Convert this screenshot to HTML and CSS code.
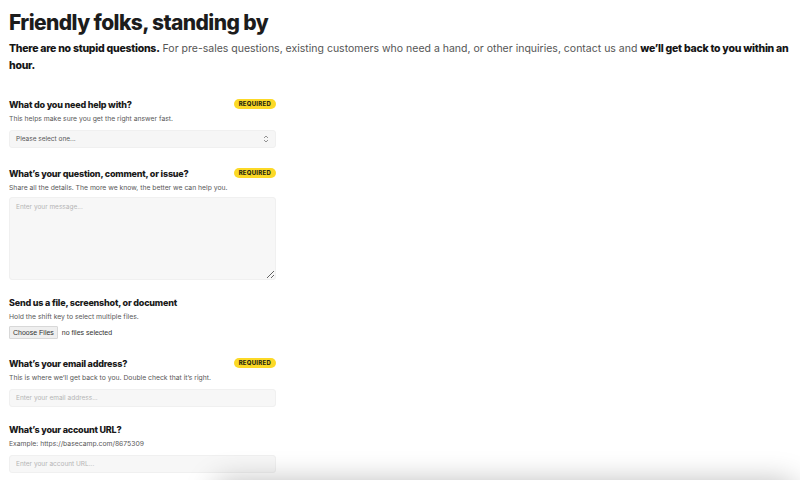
FILE: index.html
```html
<!DOCTYPE html>
<html lang="en">
<head>
<meta charset="utf-8">
<title>Contact</title>
<link rel="stylesheet" href="styles.css">
</head>
<body>
<main class="page">
  <h1 class="title">Friendly folks, standing by</h1>
  <p class="intro"><strong>There are no stupid questions.</strong> For pre-sales questions, existing customers who need a hand, or other inquiries, contact us and <strong>we’ll get back to you within an hour.</strong></p>

  <form class="form">
    <div class="field field-first">
      <div class="label-row"><label class="label">What do you need help with?</label><span class="badge">REQUIRED</span></div>
      <p class="help">This helps make sure you get the right answer fast.</p>
      <div class="select">
        <span class="select-text">Please select one...</span>
        <svg class="select-arrow" width="6" height="8" viewBox="0 0 6 8"><path d="M1 3 L3 1 L5 3 M1 5 L3 7 L5 5" fill="none" stroke="#888" stroke-width="0.9"/></svg>
      </div>
    </div>

    <div class="field">
      <div class="label-row"><label class="label">What’s your question, comment, or issue?</label><span class="badge">REQUIRED</span></div>
      <p class="help">Share all the details. The more we know, the better we can help you.</p>
      <textarea class="textarea" placeholder="Enter your message..."></textarea>
    </div>

    <div class="field">
      <div class="label-row"><label class="label">Send us a file, screenshot, or document</label></div>
      <p class="help">Hold the shift key to select multiple files.</p>
      <div class="file"><span class="file-btn">Choose Files</span><span class="file-text">no files selected</span></div>
    </div>

    <div class="field">
      <div class="label-row"><label class="label">What’s your email address?</label><span class="badge">REQUIRED</span></div>
      <p class="help">This is where we’ll get back to you. Double check that it’s right.</p>
      <input class="input" type="text" placeholder="Enter your email address...">
    </div>

    <div class="field">
      <div class="label-row"><label class="label">What’s your account URL?</label></div>
      <p class="help">Example: https://basecamp.com/8675309</p>
      <input class="input" type="text" placeholder="Enter your account URL...">
    </div>
  </form>
</main>
<div class="floating-shadow"></div>
</body>
</html>
```

FILE: styles.css
```css
html, body {
  margin: 0;
  padding: 0;
  background: #fff;
  font-family: Inter, "Noto Sans", sans-serif;
  color: #1a1a1a;
  overflow: hidden;
}

.page {
  padding: 10px 0 0 9px;
  width: 786px;
}

.title {
  margin: 0;
  font-size: 21px;
  line-height: 26px;
  font-weight: 800;
  letter-spacing: -0.6px;
  color: #1c1c1c;
}

.intro {
  margin: 4px 0 0;
  font-size: 10.5px;
  line-height: 17px;
  color: #555;
}

.intro strong {
  color: #151515;
  font-weight: 800;
  letter-spacing: -0.25px;
}

.form {
  width: 267px;
  margin-top: 25px;
  display: flex;
  flex-direction: column;
  gap: 17px;
}

.field {
  display: flex;
  flex-direction: column;
}

.field-first {
  margin-bottom: 3px;
}

.label-row {
  display: flex;
  justify-content: space-between;
  align-items: center;
  height: 12px;
}

.label {
  font-size: 9px;
  line-height: 12px;
  font-weight: 800;
  letter-spacing: -0.2px;
  color: #1a1a1a;
}

.badge {
  background: #fcd926;
  color: #2a2a10;
  font-size: 6px;
  font-weight: 800;
  letter-spacing: 0.25px;
  line-height: 10px;
  height: 10px;
  padding: 0 5px;
  border-radius: 5px;
  margin-top: -2px;
}

.help {
  margin: 3px 0 0;
  font-size: 6.8px;
  line-height: 10px;
  color: #595959;
}

.select {
  margin-top: 6px;
  height: 18px;
  background: #f6f6f6;
  border: 1px solid #f0f0f0;
  border-radius: 3px;
  box-sizing: border-box;
  display: flex;
  align-items: center;
  justify-content: space-between;
  padding: 0 6px;
}

.select-text {
  font-size: 6.5px;
  color: #555;
}

.textarea {
  margin-top: 4px;
  height: 83px;
  width: 100%;
  box-sizing: border-box;
  background: #f7f7f7;
  border: 1px solid #f0f0f0;
  border-radius: 3px;
  padding: 5px 6px;
  font-family: Inter, sans-serif;
  font-size: 6.5px;
  resize: vertical;
  display: block;
}

.textarea::placeholder,
.input::placeholder {
  color: #b5b5b5;
}

.file {
  margin-top: 4px;
  display: flex;
  align-items: center;
  gap: 4px;
  height: 13px;
  margin-bottom: 2px;
}

.file-btn {
  font-family: "Liberation Sans", Arial, sans-serif;
  font-size: 7px;
  color: #333;
  background: #efefef;
  border: 1px solid #d8d8d8;
  border-radius: 1px;
  padding: 0 3px;
  line-height: 11px;
}

.file-text {
  font-family: "Liberation Sans", Arial, sans-serif;
  font-size: 7px;
  color: #333;
}

.input {
  margin-top: 6px;
  height: 18px;
  width: 100%;
  box-sizing: border-box;
  background: #f7f7f7;
  border: 1px solid #f0f0f0;
  border-radius: 3px;
  padding: 0 6px;
  font-family: Inter, sans-serif;
  font-size: 6.5px;
  display: block;
}

.floating-shadow {
  position: fixed;
  left: 215px;
  right: 5px;
  top: 482px;
  height: 40px;
  border-radius: 10px;
  background: #fff;
  box-shadow: 0 0 30px rgba(0, 0, 0, 0.28);
}
```
